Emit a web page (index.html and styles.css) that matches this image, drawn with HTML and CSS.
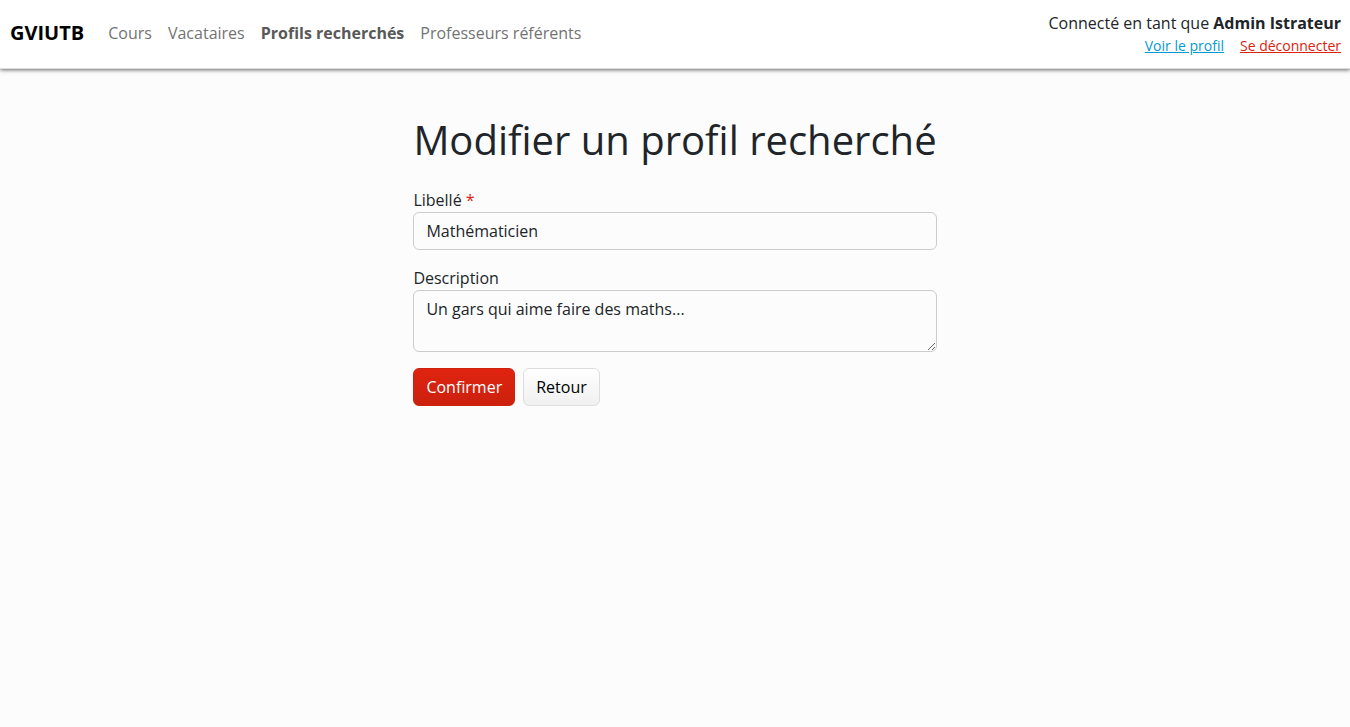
FILE: index.html
```html
<!DOCTYPE html>
<html lang="fr">
<head>
<meta charset="utf-8">
<meta name="viewport" content="width=device-width, initial-scale=1">
<title>Modifier un profil recherché</title>
<link rel="stylesheet" href="styles.css">
</head>
<body>
<header class="navbar">
  <a class="brand" href="#">GVIUTB</a>
  <nav class="nav">
    <a class="nav-link" href="#">Cours</a>
    <a class="nav-link" href="#">Vacataires</a>
    <a class="nav-link active" href="#" aria-current="page">Profils recherchés</a>
    <a class="nav-link" href="#">Professeurs référents</a>
  </nav>
  <div class="user">
    <div>Connecté en tant que <strong>Admin Istrateur</strong></div>
    <div class="user-links">
      <a class="link-info" href="#">Voir le profil</a>
      <a class="link-danger" href="#">Se déconnecter</a>
    </div>
  </div>
</header>
<main class="page">
  <div class="panel">
    <h1 class="title">Modifier un profil recherché</h1>
    <form class="form">
      <div class="field">
        <label for="libelle">Libellé <span class="required">*</span></label>
        <input class="control" id="libelle" type="text" value="Mathématicien" required>
      </div>
      <div class="field">
        <label for="description">Description</label>
        <textarea class="control" id="description" rows="2">Un gars qui aime faire des maths...</textarea>
      </div>
      <div class="actions">
        <button class="btn btn-primary" type="submit">Confirmer</button>
        <button class="btn btn-light" type="button">Retour</button>
      </div>
    </form>
  </div>
</main>
</body>
</html>
```
FILE: styles.css
```css
*, *::before, *::after {
  box-sizing: border-box;
}

body {
  margin: 0;
  background: #fcfcfc;
  color: #212529;
  font-family: "Open Sans", sans-serif;
  font-size: 16px;
  line-height: 24px;
}

.navbar {
  display: flex;
  align-items: flex-start;
  padding: 11px 9px 11px 10px;
  border-bottom: 1px solid #ddd;
  background: #fff;
  box-shadow: 0 1px 4px rgba(0, 0, 0, 0.6);
}

.brand {
  margin-right: 16px;
  padding: 7px 0;
  color: #000;
  font-size: 20px;
  font-weight: 700;
  line-height: 30px;
  text-decoration: none;
}

.nav {
  display: flex;
}

.nav-link {
  padding: 10px 8px;
  color: #737373;
  text-decoration: none;
}

.nav-link.active {
  color: #595959;
  font-weight: 700;
}

.user {
  margin-left: auto;
  text-align: right;
}

.user-links {
  display: flex;
  justify-content: flex-end;
  gap: 16px;
  font-size: 14px;
  line-height: 22px;
}

.link-info {
  color: #029acf;
}

.link-danger {
  color: #d9230f;
}

.page {
  display: flex;
  justify-content: center;
  padding: 47px 12px;
}

.title {
  margin: 0 0 24px;
  font-size: 40px;
  font-weight: 400;
  line-height: 48px;
}

.form {
  display: flex;
  flex-direction: column;
  gap: 16px;
}

.field {
  display: flex;
  flex-direction: column;
}

.required {
  color: #d9230f;
}

.control {
  width: 100%;
  margin: 0;
  padding: 6px 12px;
  border: 1px solid #ccc;
  border-radius: 6px;
  background: #fcfcfc;
  color: #212529;
  font: inherit;
}

textarea.control {
  resize: vertical;
}

.actions {
  display: flex;
  gap: 8px;
}

.btn {
  padding: 6px 12px;
  border: 1px solid;
  border-radius: 6px;
  font: inherit;
  cursor: pointer;
}

.btn-primary {
  border-color: #cd210e;
  background: linear-gradient(#df2410, #cb210e);
  color: #fff;
}

.btn-light {
  border-color: #ddd;
  background: linear-gradient(#fff, #f0f0f0);
  color: #000;
}
```
